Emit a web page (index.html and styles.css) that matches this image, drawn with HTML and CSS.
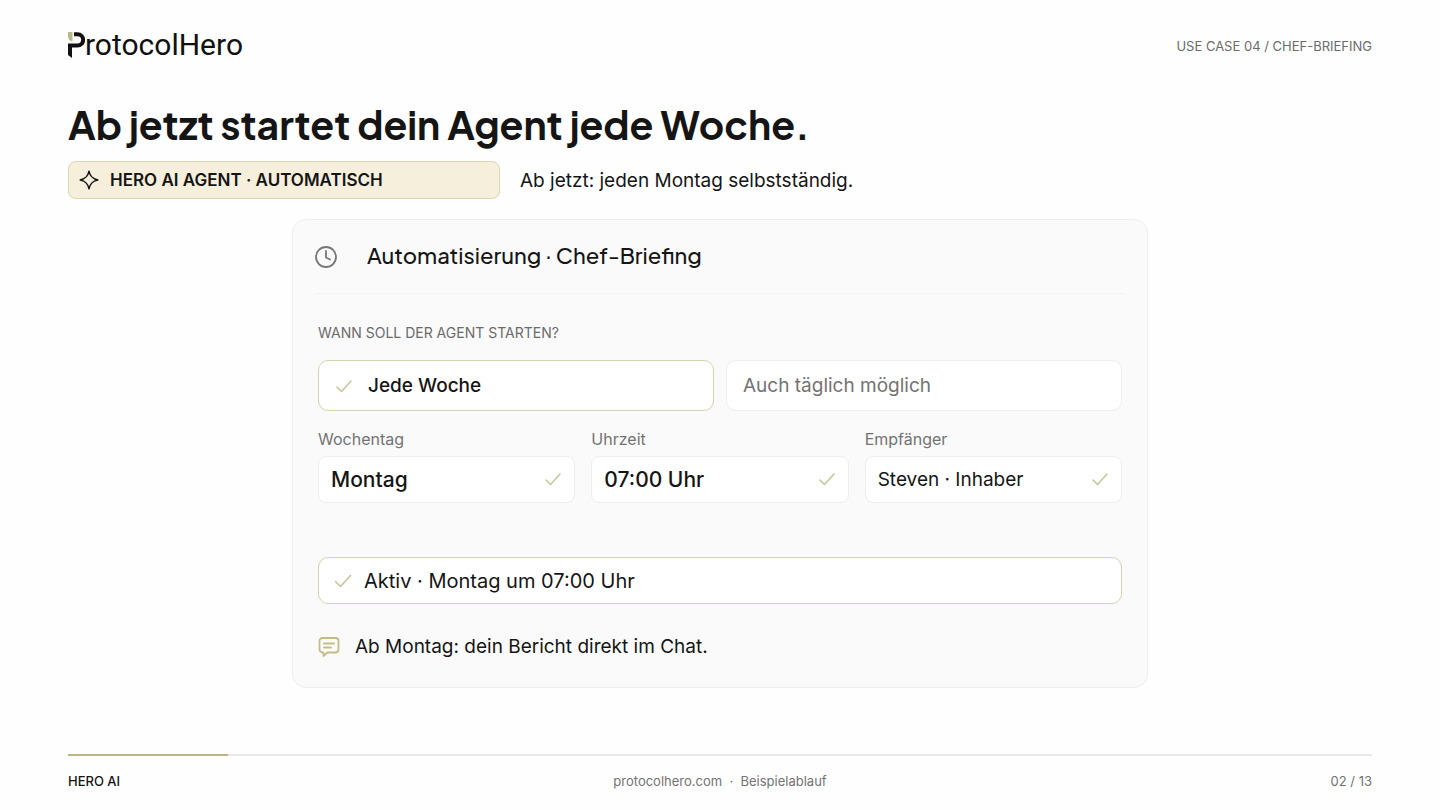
FILE: index.html
```html
<!DOCTYPE html>
<html lang="de">
<head>
    <meta charset="UTF-8">
    <meta name="viewport" content="width=device-width, initial-scale=1.0">
    <title>ProtocolHero - Chef-Briefing</title>
    <link rel="stylesheet" href="styles.css">
</head>
<body>
    <header class="topbar">
        <div class="logo">
            <svg class="logo-mark" viewBox="0 0 17 26" aria-label="P">
                <path d="M0 0h4.500v9.500C1.500 9 0 7 0 4z" fill="#b9b98a"/>
                <path d="M6 2.200h3.500a5.300 5.300 0 0 1 0 11.300H2V22" fill="none" stroke="#111" stroke-width="4"/>
                <path d="M0 20h4v6L0 23z" fill="#111"/>
            </svg>
            <span>rotocolHero</span>
        </div>
        <div class="case">USE CASE 04 / CHEF-BRIEFING</div>
    </header>

    <main>
        <h1>Ab jetzt startet dein Agent jede Woche.</h1>

        <div class="intro">
            <div class="agent-tag">
                <svg class="icon-spark" viewBox="0 0 20 20">
                    <path d="M10 1.200c1.100 5.300 3.200 7.600 8.800 8.800-5.600 1.200-7.700 3.500-8.800 8.800C8.900 13.500 6.800 11.200 1.200 10 6.800 8.800 8.900 6.500 10 1.200z"/>
                </svg>
                HERO AI AGENT · AUTOMATISCH
            </div>
            <p>Ab jetzt: jeden Montag selbstständig.</p>
        </div>

        <section class="card">
            <div class="card-head">
                <svg class="icon-clock" viewBox="0 0 22 22">
                    <circle cx="11" cy="11" r="10"/>
                    <path d="M11 5v6.500l4 2"/>
                </svg>
                <h2>Automatisierung · Chef-Briefing</h2>
            </div>

            <form class="card-body">
                <div class="question">WANN SOLL DER AGENT STARTEN?</div>

                <div class="options">
                    <button type="button" class="option active" aria-pressed="true">
                        <svg class="check" viewBox="0 0 18 14"><path d="M2 8l4.500 4.500L16 2"/></svg>
                        Jede Woche
                    </button>
                    <button type="button" class="option" aria-pressed="false">Auch täglich möglich</button>
                </div>

                <div class="fields">
                    <div class="field">
                        <label for="day">Wochentag</label>
                        <div class="control">
                            <select id="day">
                                <option>Montag</option>
                                <option>Dienstag</option>
                                <option>Mittwoch</option>
                                <option>Donnerstag</option>
                                <option>Freitag</option>
                            </select>
                            <svg class="check" viewBox="0 0 18 14"><path d="M2 8l4.500 4.500L16 2"/></svg>
                        </div>
                    </div>
                    <div class="field">
                        <label for="time">Uhrzeit</label>
                        <div class="control">
                            <input type="text" id="time" value="07:00 Uhr">
                            <svg class="check" viewBox="0 0 18 14"><path d="M2 8l4.500 4.500L16 2"/></svg>
                        </div>
                    </div>
                    <div class="field">
                        <label for="recipient">Empfänger</label>
                        <div class="control">
                            <select id="recipient" class="small">
                                <option>Steven · Inhaber</option>
                            </select>
                            <svg class="check" viewBox="0 0 18 14"><path d="M2 8l4.500 4.500L16 2"/></svg>
                        </div>
                    </div>
                </div>

                <div class="status">
                    <svg class="check" viewBox="0 0 18 14"><path d="M1.500 7.500l5 5L16.500 1.500"/></svg>
                    Aktiv · Montag um 07:00 Uhr
                </div>

                <div class="message">
                    <svg class="icon-chat" viewBox="0 0 22 22">
                        <path d="M4.500 2h13A3 3 0 0 1 20.500 5v8.500a3 3 0 0 1-3 3H9.500L5.500 20v-3.500h-1a3 3 0 0 1-3-3V5a3 3 0 0 1 3-3z"/>
                        <path d="M6 7.500h10M6 11.500h7"/>
                    </svg>
                    Ab Montag: dein Bericht direkt im Chat.
                </div>
            </form>
        </section>
    </main>

    <footer>
        <div class="progress"><div class="progress-bar"></div></div>
        <div class="footer-row">
            <strong>HERO AI</strong>
            <div><a href="#">protocolhero.com</a> &nbsp;·&nbsp; Beispielablauf</div>
            <div class="page">02 / 13</div>
        </div>
    </footer>
</body>
</html>
```
FILE: styles.css
```css
* {
    box-sizing: border-box;
}
body {
    font-family: Inter, "Liberation Sans", sans-serif;
    background: #fefefe;
    color: #151515;
    margin: 0;
    padding: 0 68px;
    min-height: 100vh;
    display: flex;
    flex-direction: column;
}
h1, h2, p {
    margin: 0;
}
svg {
    flex: none;
    fill: none;
    stroke-linecap: round;
    stroke-linejoin: round;
}

/* header */
.topbar {
    display: flex;
    justify-content: space-between;
    align-items: center;
    height: 92px;
}
.logo {
    display: flex;
    align-items: center;
    padding-bottom: 3px;
    font-family: Roboto, sans-serif;
    font-size: 30px;
    line-height: 36px;
    color: #111;
}
.logo-mark {
    width: 17px;
    height: 26px;
    stroke-linecap: butt;
    stroke-linejoin: miter;
}
.case {
    font-size: 13px;
    color: #6b6b6b;
}

/* intro */
h1 {
    font-family: "Plus Jakarta Sans", Inter, sans-serif;
    font-size: 39px;
    font-weight: 700;
    line-height: 52px;
    margin-top: 7px;
}
.intro {
    display: flex;
    align-items: center;
    gap: 20px;
    margin: 10px 0 20px;
    font-size: 19px;
}
.agent-tag {
    display: flex;
    align-items: center;
    gap: 11px;
    width: 432px;
    height: 38px;
    padding: 0 10px;
    background: #f5efdc;
    border: 1px solid #dcd6ac;
    border-radius: 8px;
    font-size: 17px;
    font-weight: 600;
}
.icon-spark {
    width: 20px;
    height: 20px;
    stroke: #151515;
    stroke-width: 1.5;
}

/* card */
.card {
    max-width: 856px;
    margin: 0 auto;
    padding: 0 22px 28px;
    background: #fafafa;
    border: 1px solid #eeeeee;
    border-radius: 14px;
}
.card-head {
    display: flex;
    align-items: center;
    gap: 30px;
    height: 74px;
    border-bottom: 1px solid #f2f2f2;
}
.card-head h2 {
    font-family: "Plus Jakarta Sans", Inter, sans-serif;
    font-size: 22px;
    font-weight: 500;
    line-height: 28px;
    padding-bottom: 3px;
}
.icon-clock {
    width: 22px;
    height: 22px;
    stroke: #777;
    stroke-width: 1.8;
}
.card-body {
    padding: 0 3px;
}
.question {
    margin: 29px 0 17px;
    font-size: 14px;
    line-height: 20px;
    color: #6b6b6b;
}
.options {
    display: grid;
    grid-template-columns: 1fr 1fr;
    gap: 12px;
}
.option {
    display: flex;
    align-items: center;
    gap: 15px;
    height: 51px;
    padding: 0 16px;
    background: #fff;
    border: 1px solid #eeeeee;
    border-radius: 10px;
    font-family: inherit;
    font-size: 19px;
    color: #737373;
    cursor: pointer;
}
.option.active {
    border-color: #d6d4b0;
    color: #151515;
    font-weight: 500;
}
.check {
    width: 18px;
    height: 14px;
    stroke: #c5c698;
    stroke-width: 1.5;
}
.fields {
    display: grid;
    grid-template-columns: repeat(3, 1fr);
    gap: 16px;
    margin: 16px 0 54px;
}
.field label {
    display: block;
    margin-bottom: 5px;
    font-size: 16px;
    line-height: 24px;
    color: #737373;
}
.control {
    position: relative;
}
.control select,
.control input {
    appearance: none;
    width: 100%;
    height: 47px;
    padding: 0 40px 0 12px;
    background: #fff;
    border: 1px solid #eeeeee;
    border-radius: 8px;
    font-family: inherit;
    font-size: 21px;
    font-weight: 500;
    color: #151515;
}
.control select.small {
    font-size: 19px;
    font-weight: 400;
}
.control .check {
    position: absolute;
    top: 16px;
    right: 13px;
    pointer-events: none;
}
.status {
    display: flex;
    align-items: center;
    gap: 12px;
    height: 47px;
    padding: 0 15px;
    background: #fff;
    border: 1px solid #d6d4b0;
    border-radius: 10px;
    font-size: 20px;
}
.message {
    display: flex;
    align-items: center;
    gap: 15px;
    margin-top: 31px;
    font-size: 19px;
    line-height: 24px;
}
.icon-chat {
    width: 22px;
    height: 22px;
    stroke: #c3bd85;
    stroke-width: 1.8;
}

/* footer */
footer {
    margin-top: auto;
    font-size: 13px;
    color: #737373;
}
.progress {
    height: 2px;
    background: #e9e9e9;
}
.progress-bar {
    width: 160px;
    height: 2px;
    background: #bdb582;
}
.footer-row {
    display: grid;
    grid-template-columns: 1fr auto 1fr;
    align-items: center;
    height: 50px;
    margin-bottom: 4px;
}
.footer-row strong {
    font-weight: 500;
    color: #151515;
}
.footer-row a {
    color: inherit;
    text-decoration: none;
}
.page {
    text-align: right;
}
```
